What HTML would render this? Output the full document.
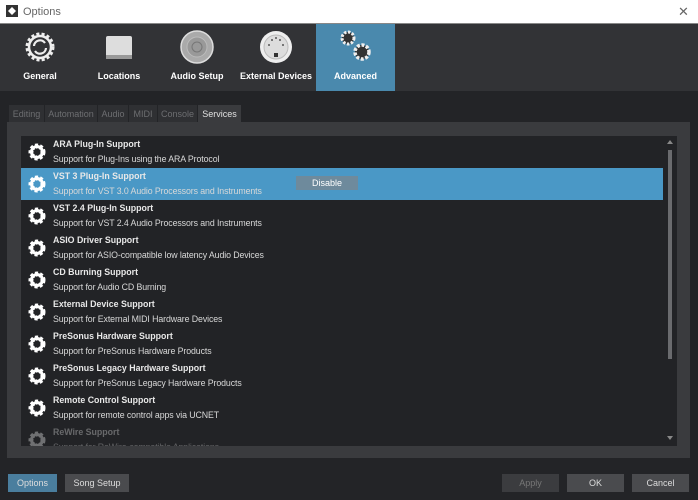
<!DOCTYPE html>
<html><head><meta charset="utf-8"><style>
*{margin:0;padding:0;box-sizing:border-box}
body{width:698px;height:500px;overflow:hidden;background:#232427;font-family:"Liberation Sans",sans-serif;position:relative}
.title{position:absolute;left:0;top:0;width:698px;height:24px;background:#fff;border-bottom:1px solid #888}
.title .t{position:absolute;left:23px;top:6px;font-size:11px;color:#666}
.title .x{position:absolute;left:678px;top:4px;font-size:13px;color:#666}
.bar{position:absolute;left:0;top:24px;width:698px;height:67px;background:#323336}
.tb{position:absolute;top:0;height:67px;text-align:center;color:#fff;font-weight:bold;font-size:9px}
.tb .l{position:absolute;left:0;right:0;top:47px}
.tb svg{position:absolute;left:50%;top:5px;margin-left:-18px}
.tabs{position:absolute;top:105px;left:0;height:17px;font-size:9px}
.tab{position:absolute;top:0;height:17px;background:#2f3033;color:#6d6e71;padding:4px 0 0;text-align:center}
.panel{position:absolute;left:7px;top:122px;width:683px;height:336px;background:#3a3b3e}
.list{position:absolute;left:21px;top:136px;width:656px;height:310px;background:#222326;overflow:hidden}
.row{position:absolute;left:0;width:642px;height:32px}
.row.sel{background:#4a98c6}
.row b{position:absolute;left:32px;top:3px;font-size:8.8px;color:#e8e8e8}
.row i{position:absolute;left:32px;top:18px;font-size:8.8px;color:#d8d8d8;font-style:normal;letter-spacing:-0.1px}
.row svg{position:absolute;left:6px;top:6px}
.dis{position:absolute;left:275px;top:8px;width:62px;height:14px;background:#6e8a9c;color:#fff;font-size:9px;text-align:center;padding-top:2px}
.sb{position:absolute;left:647px;top:14px;width:4px;height:209px;background:#6a6b6e}
.btn{position:absolute;top:474px;height:18px;font-size:9px;text-align:center;padding-top:4px;color:#ddd;background:#4a4b4e}
</style></head><body>
<div class="title"><svg style="position:absolute;left:6px;top:5px" width="12" height="12"><rect width="12" height="12" fill="#333"/><path d="M2 6 L6 2 L10 6 L6 10Z" fill="#fff"/></svg><span class="t">Options</span><span class="x">✕</span></div>
<div class="bar">
<div class="tb" style="left:0;width:80px"><svg width="36" height="36" viewBox="0 0 36 36"><circle cx="18" cy="18" r="13" fill="none" stroke="#eee" stroke-width="3" stroke-dasharray="3 2.2"/><circle cx="18" cy="18" r="11" fill="none" stroke="#eee" stroke-width="2.5"/><path d="M12 17a6 6 0 0 1 11-3M24 19a6 6 0 0 1-11 3" fill="none" stroke="#eee" stroke-width="2.2"/></svg><div class="l">General</div></div>
<div class="tb" style="left:80px;width:78px"><svg width="36" height="36"><rect x="5" y="7" width="26" height="22" rx="2" fill="#ddd"/><rect x="5" y="26" width="26" height="4" fill="#999"/></svg><div class="l">Locations</div></div>
<div class="tb" style="left:158px;width:78px"><svg width="36" height="36"><circle cx="18" cy="18" r="16" fill="#aaa" stroke="#ddd" stroke-width="1.5"/><circle cx="18" cy="18" r="10" fill="#999" stroke="#bbb"/><circle cx="18" cy="18" r="5" fill="none" stroke="#777"/></svg><div class="l">Audio Setup</div></div>
<div class="tb" style="left:236px;width:80px"><svg width="36" height="36"><circle cx="18" cy="18" r="16" fill="#eee"/><circle cx="18" cy="18" r="12" fill="#ddd" stroke="#bbb"/><rect x="16" y="24" width="4" height="4" fill="#333"/><circle cx="11" cy="16" r="1" fill="#555"/><circle cx="25" cy="16" r="1" fill="#555"/><circle cx="14" cy="11" r="1" fill="#555"/><circle cx="22" cy="11" r="1" fill="#555"/><circle cx="18" cy="9" r="1" fill="#555"/></svg><div class="l">External Devices</div></div>
<div class="tb" style="left:316px;width:79px;background:#4a89ad"><svg width="36" height="36"><circle cx="10" cy="9" r="6" fill="#333" stroke="#eee" stroke-width="3" stroke-dasharray="2.5 1.5"/><circle cx="24" cy="23" r="7" fill="#333" stroke="#eee" stroke-width="3.5" stroke-dasharray="3 1.6"/></svg><div class="l">Advanced</div></div>
</div>
<div class="tabs">
<div class="tab" style="left:9px;width:35px">Editing</div>
<div class="tab" style="left:45px;width:52px">Automation</div>
<div class="tab" style="left:98px;width:30px">Audio</div>
<div class="tab" style="left:129px;width:28px">MIDI</div>
<div class="tab" style="left:158px;width:39px">Console</div>
<div class="tab" style="left:198px;width:43px;background:#3a3b3e;color:#e0e0e0">Services</div>
</div>
<div class="panel"></div>
<div class="list">
<div class="sb"></div>
<div style="position:absolute;left:646px;top:4px;border:3px solid transparent;border-bottom:4px solid #888;border-top:0"></div>
<div style="position:absolute;left:646px;top:300px;border:3px solid transparent;border-top:4px solid #888;border-bottom:0"></div>
</div>
<div id="rows" style="position:absolute;left:21px;top:136px;width:656px;height:310px;overflow:hidden"></div>
<div class="btn" style="left:8px;width:49px;background:#4a7e9e;color:#ddd">Options</div>
<div class="btn" style="left:65px;width:64px">Song Setup</div>
<div class="btn" style="left:502px;width:57px;background:#3b3c3f;color:#777">Apply</div>
<div class="btn" style="left:567px;width:57px">OK</div>
<div class="btn" style="left:632px;width:57px">Cancel</div>
<script>
var d=[["ARA Plug-In Support","Support for Plug-Ins using the ARA Protocol"],["VST 3 Plug-In Support","Support for VST 3.0 Audio Processors and Instruments"],["VST 2.4 Plug-In Support","Support for VST 2.4 Audio Processors and Instruments"],["ASIO Driver Support","Support for ASIO-compatible low latency Audio Devices"],["CD Burning Support","Support for Audio CD Burning"],["External Device Support","Support for External MIDI Hardware Devices"],["PreSonus Hardware Support","Support for PreSonus Hardware Products"],["PreSonus Legacy Hardware Support","Support for PreSonus Legacy Hardware Products"],["Remote Control Support","Support for remote control apps via UCNET"],["ReWire Support","Support for ReWire-compatible Applications"]];
var g='<svg width="20" height="20" viewBox="0 0 20 20"><circle cx="10" cy="10" r="6" fill="none" stroke="#fff" stroke-width="5" stroke-dasharray="2.6 1.8"/><circle cx="10" cy="10" r="5.5" fill="none" stroke="#fff" stroke-width="3"/></svg>';
var h='';d.forEach(function(r,i){h+='<div class="row'+(i==1?' sel':'')+'" style="top:'+(i*32)+'px'+(i==9?';opacity:.35':'')+'">'+g+'<b>'+r[0]+'</b><i>'+r[1]+'</i>'+(i==1?'<div class="dis">Disable</div>':'')+'</div>'});
document.getElementById('rows').innerHTML=h;
</script>
</body></html>
